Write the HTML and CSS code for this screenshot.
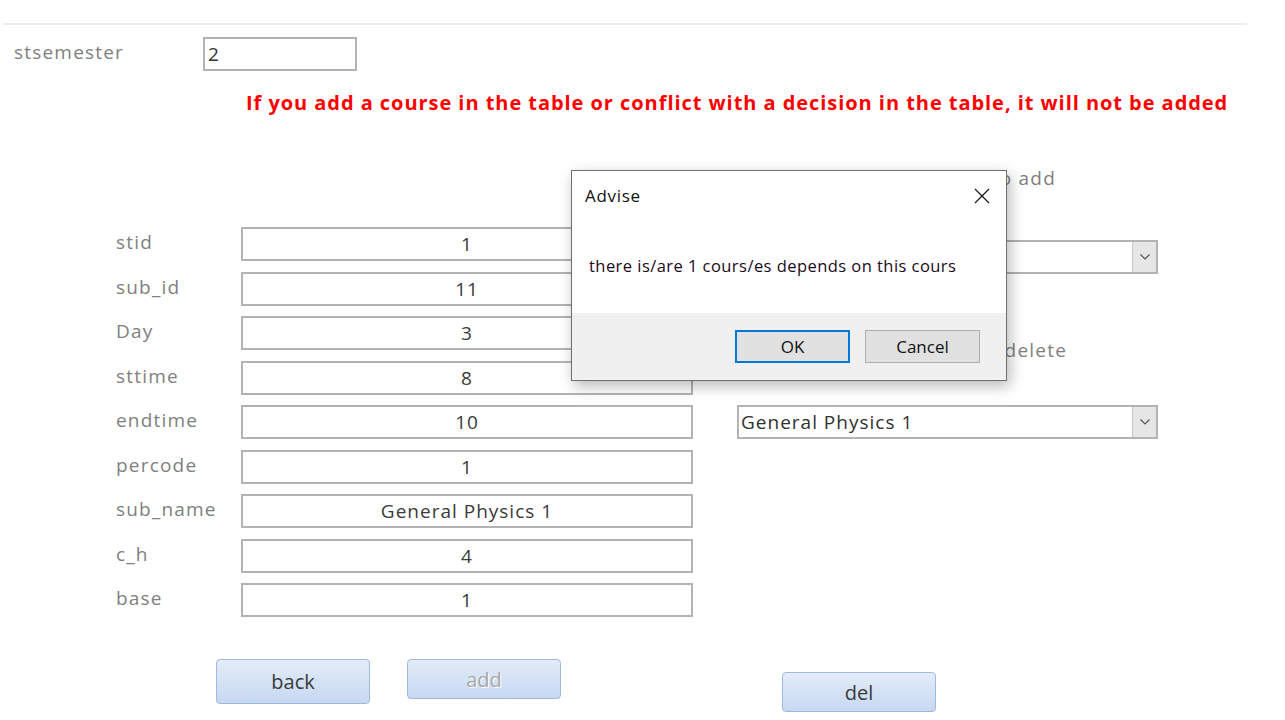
FILE: index.html
```html
<!DOCTYPE html>
<html>
<head>
<meta charset="utf-8">
<link rel="stylesheet" href="styles.css">
</head>
<body>
<div class="topline"></div>
<div class="semester">
  <span class="lbl sem-lbl">stsemester</span>
  <div class="sem-box">2</div>
</div>
<div class="warning">If you add a course in the table or conflict with a decision in the table, it will not be added</div>

<div class="main">
  <div class="form">
    <span class="lbl">stid</span><div class="field">1</div>
    <span class="lbl">sub_id</span><div class="field">11</div>
    <span class="lbl">Day</span><div class="field">3</div>
    <span class="lbl">sttime</span><div class="field">8</div>
    <span class="lbl">endtime</span><div class="field">10</div>
    <span class="lbl">percode</span><div class="field">1</div>
    <span class="lbl">sub_name</span><div class="field">General Physics 1</div>
    <span class="lbl">c_h</span><div class="field">4</div>
    <span class="lbl">base</span><div class="field">1</div>
  </div>
  <div class="side">
    <div class="side-lbl lbl-add">select course to add</div>
    <div class="combo combo-add"><span class="combo-val"></span><span class="combo-btn"><svg width="12" height="8" viewBox="0 0 12 8"><path d="M1.5 1.5 L6 6 L10.5 1.5" fill="none" stroke="#555" stroke-width="1.2"/></svg></span></div>
    <div class="side-lbl lbl-del">select course to delete</div>
    <div class="combo combo-del"><span class="combo-val">General Physics 1</span><span class="combo-btn"><svg width="12" height="8" viewBox="0 0 12 8"><path d="M1.5 1.5 L6 6 L10.5 1.5" fill="none" stroke="#555" stroke-width="1.2"/></svg></span></div>
  </div>
</div>

<div class="buttons">
  <button class="btn btn-back">back</button>
  <button class="btn btn-add">add</button>
  <button class="btn btn-del">del</button>
</div>

<div class="dialog">
  <div class="dlg-title">
    <span>Advise</span>
    <svg class="dlg-close" width="16" height="16" viewBox="0 0 16 16"><path d="M1 1 L15 15 M15 1 L1 15" stroke="#1a1a1a" stroke-width="1.3" fill="none"/></svg>
  </div>
  <div class="dlg-msg">there is/are 1 cours/es depends on this cours</div>
  <div class="dlg-foot">
    <button class="dbtn dbtn-ok">OK</button>
    <button class="dbtn">Cancel</button>
  </div>
</div>
</body>
</html>
```

FILE: styles.css
```css
* { box-sizing: border-box; }
html, body { margin: 0; padding: 0; background: #fff; }
body {
  width: 1285px;
  height: 720px;
  overflow: hidden;
  position: relative;
  font-family: "Open Sans", "Noto Sans", sans-serif;
}
.topline {
  margin: 23px 38px 0 3px;
  height: 2px;
  background: #ececec;
}
.lbl {
  color: #808080;
  font-size: 19px;
  letter-spacing: 1.2px;
  line-height: 34px;
}
.semester {
  display: flex;
  align-items: center;
  margin-top: 12px;
  padding-left: 14px;
}
.sem-lbl { width: 189px; margin-top: -4px; }
.sem-box {
  width: 154px;
  height: 34px;
  border: 2px solid #b3b3b3;
  font-size: 19px;
  color: #303030;
  line-height: 30px;
  padding-left: 3px;
}
.warning {
  margin: 18px 0 0 246px;
  color: #ff0000;
  font-weight: bold;
  font-size: 20px;
  line-height: 28px;
  white-space: nowrap;
  letter-spacing: 0.95px;
}
.main {
  display: flex;
  margin-top: 110px;
  padding-left: 116px;
}
.form {
  display: grid;
  grid-template-columns: 125px 452px;
  grid-auto-rows: 34px;
  row-gap: 10.5px;
}
.form .lbl { margin-top: -2px; }
.field {
  border: 2px solid #b3b3b3;
  font-size: 19px;
  letter-spacing: 1px;
  color: #3a3a3a;
  text-align: center;
  line-height: 30px;
}
.side {
  margin-left: 44px;
  width: 421px;
  display: flex;
  flex-direction: column;
  margin-top: -61px;
}
.side-lbl {
  color: #808080;
  font-size: 19px;
  letter-spacing: 1.2px;
  line-height: 24px;
  text-align: right;
}
.lbl-add { margin-right: 102px; }
.lbl-del { margin-right: 91px; margin-top: 64px; }
.combo {
  display: flex;
  height: 34px;
  border: 2px solid #b3b3b3;
  margin-top: 50px;
}
.combo-del { margin-top: 43px; }
.combo-val {
  flex: 1;
  font-size: 19px;
  letter-spacing: 1px;
  color: #303030;
  line-height: 30px;
  padding-left: 2px;
}
.combo-btn {
  width: 24px;
  background: #e6e6e6;
  border-left: 1px solid #c8c8c8;
  display: flex;
  align-items: center;
  justify-content: center;
}
.buttons {
  display: flex;
  align-items: flex-start;
  margin-top: 42px;
  padding-left: 216px;
}
.btn {
  width: 154px;
  font-family: "Open Sans", sans-serif;
  font-size: 20px;
  color: #3a3a3a;
  border: 1px solid #9fb8de;
  border-radius: 4px;
  background: linear-gradient(#e3ecf9, #c6d8f1);
  padding: 0;
}
.btn-back { height: 45px; }
.btn-add {
  height: 40px;
  margin-left: 37px;
  color: #a8a8a8;
  text-shadow: 1px 1px 0 #fff;
}
.btn-del {
  height: 40px;
  margin-left: 221px;
  margin-top: 13px;
}
.dialog {
  position: absolute;
  left: 571px;
  top: 170px;
  width: 436px;
  height: 211px;
  background: #fff;
  border: 1px solid #6f6f6f;
  box-shadow: 3px 5px 14px rgba(0, 0, 0, 0.28);
  display: flex;
  flex-direction: column;
  font-family: "Open Sans", sans-serif;
}
.dlg-title {
  display: flex;
  justify-content: space-between;
  align-items: center;
  padding: 9px 16px 0 13px;
  font-size: 17px;
  letter-spacing: 0.7px;
  color: #111;
  height: 40px;
}
.dlg-close { margin-top: 0; }
.dlg-msg {
  padding: 0 0 0 17px;
  margin-top: 43px;
  font-size: 16.5px;
  letter-spacing: 0.45px;
  color: #1a0a1a;
  flex: 1;
}
.dlg-foot {
  height: 67px;
  background: #f0f0f0;
  display: flex;
  justify-content: flex-end;
  align-items: center;
  padding-right: 26px;
  gap: 15px;
}
.dbtn {
  width: 115px;
  height: 33px;
  background: #e1e1e1;
  border: 1px solid #adadad;
  font-family: "Open Sans", sans-serif;
  font-size: 17px;
  color: #111;
  padding: 0;
}
.dbtn-ok {
  border: 2px solid #0078d7;
}
```
